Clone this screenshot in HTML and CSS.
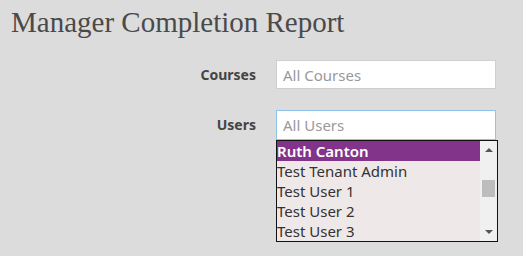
FILE: index.html
```html
<!DOCTYPE html>
<html>
<head>
    <title>Manager Completion Report</title>
    <link rel="stylesheet" href="styles.css">
</head>
<body>
    <h1>Manager Completion Report</h1>
    <div class="form">
        <div class="row">
            <label class="label">Courses</label>
            <div class="field">
                <input class="input" type="text" placeholder="All Courses">
            </div>
        </div>
        <div class="row">
            <label class="label">Users</label>
            <div class="field">
                <input class="input focus" type="text" placeholder="All Users">
                <div class="dropdown">
                    <ul class="options">
                        <li class="selected">Ruth Canton</li>
                        <li>Test Tenant Admin</li>
                        <li>Test User 1</li>
                        <li>Test User 2</li>
                        <li>Test User 3</li>
                    </ul>
                    <div class="scrollbar">
                        <span class="arrow up"></span>
                        <div class="track"><div class="thumb"></div></div>
                        <span class="arrow down"></span>
                    </div>
                </div>
            </div>
        </div>
    </div>
</body>
</html>
```

FILE: styles.css
```css
* {
    margin: 0;
    padding: 0;
    box-sizing: border-box;
}

body {
    background: #dcdcdc;
    font-family: 'Noto Sans', 'Open Sans', sans-serif;
    color: #333;
    width: 523px;
    height: 256px;
    overflow: hidden;
}

h1 {
    font-family: 'Liberation Serif', serif;
    font-weight: normal;
    font-size: 29px;
    line-height: 36px;
    color: #4a4a4a;
    padding: 4px 0 0 11px;
    height: 60px;
}

.form {
    display: flex;
    flex-direction: column;
    gap: 21px;
}

.row {
    display: flex;
    align-items: flex-start;
}

.label {
    width: 256px;
    text-align: right;
    font-weight: bold;
    font-size: 14px;
    color: #444;
    line-height: 29px;
}

.field {
    margin-left: 20px;
    width: 220px;
    position: relative;
}

.input {
    display: block;
    width: 220px;
    height: 29px;
    border: 1px solid #cfcfcf;
    background: #fff;
    padding: 0 6px;
    font-family: inherit;
    font-size: 15px;
    color: #333;
    outline: none;
}

.input::placeholder {
    color: #999;
}

.input.focus {
    border-color: #8fc3e8;
    height: 30px;
}

.dropdown {
    position: absolute;
    top: 30px;
    left: 0;
    width: 222px;
    height: 102px;
    border: 1px solid #111;
    background: #efe8e8;
    display: flex;
}

.options {
    list-style: none;
    flex: 1;
}

.options li {
    height: 20px;
    line-height: 20px;
    font-size: 15px;
    color: #333;
    white-space: nowrap;
}

.options li.selected {
    background: #82348a;
    color: #fff;
    font-weight: 600;
    font-size: 15px;
}

.scrollbar {
    width: 17px;
    background: #f0f0f0;
    display: flex;
    flex-direction: column;
    align-items: center;
}

.arrow {
    width: 0;
    height: 0;
    border-left: 4px solid transparent;
    border-right: 4px solid transparent;
    margin: 7px 0;
}

.arrow.up {
    border-bottom: 4px solid #555;
}

.arrow.down {
    border-top: 4px solid #555;
}

.track {
    flex: 1;
    width: 100%;
    padding-top: 21px;
    display: flex;
    justify-content: center;
}

.thumb {
    width: 13px;
    height: 17px;
    background: #bdbdbd;
}
```
